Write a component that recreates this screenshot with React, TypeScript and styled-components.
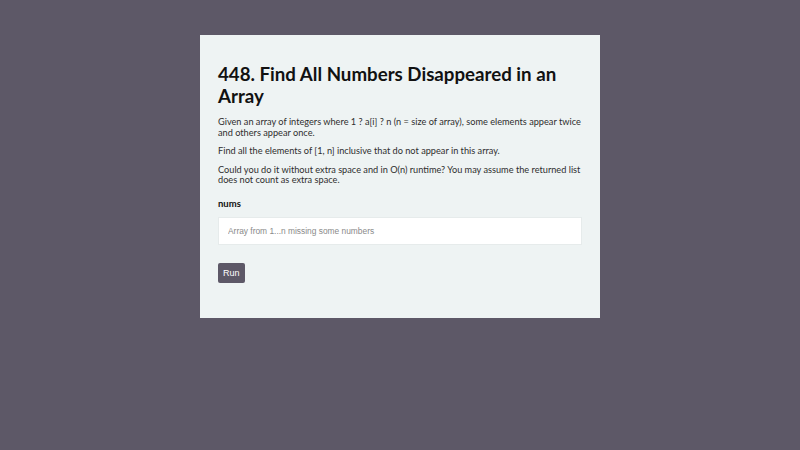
import styled, { createGlobalStyle } from "styled-components";

const GlobalStyle = createGlobalStyle`
  html, body {
    margin: 0;
    padding: 0;
    background: #5d5867;
  }
  body {
    font-family: Lato, "Open Sans", sans-serif;
  }
`;

const Page = styled.div`
  width: 800px;
  height: 450px;
  display: flex;
  justify-content: center;
  align-items: flex-start;
  padding-top: 35px;
  box-sizing: border-box;
`;

const Card = styled.div`
  width: 400px;
  box-sizing: border-box;
  padding: 28px 18px 35px;
  background: #eef3f3;
  color: #111;
`;

const Title = styled.h1`
  margin: 0 0 10px;
  font-size: 18.7px;
  line-height: 22px;
  font-weight: 700;
`;

const Text = styled.p`
  margin: 0 0 8px;
  font-size: 9.2px;
  line-height: 10.5px;
  color: #2e2e2e;
`;

const Label = styled.div`
  margin-top: 12px;
  font-size: 9.5px;
  font-weight: 700;
`;

const Input = styled.input`
  display: block;
  width: 100%;
  box-sizing: border-box;
  height: 28px;
  margin-top: 8px;
  padding: 0 9px;
  border: 1px solid #e6ebeb;
  background: #fff;
  font-family: "Liberation Sans", Arial, sans-serif;
  font-size: 8.4px;
  outline: none;

  &::placeholder {
    color: #8a8a8a;
  }
`;

const Button = styled.button`
  margin-top: 18px;
  height: 20px;
  padding: 0 5px;
  border: none;
  border-radius: 2px;
  background: #5d5867;
  color: #fff;
  font-family: "Liberation Sans", Arial, sans-serif;
  font-size: 9px;
`;

export default function App() {
  return (
    <>
      <GlobalStyle />
      <Page>
        <Card>
          <Title>448. Find All Numbers Disappeared in an Array</Title>
          <Text>
            Given an array of integers where 1 ? a[i] ? n (n = size of array),
            some elements appear twice and others appear once.
          </Text>
          <Text>Find all the elements of [1, n] inclusive that do not appear in this array.</Text>
          <Text>
            Could you do it without extra space and in O(n) runtime? You may
            assume the returned list does not count as extra space.
          </Text>
          <Label>nums</Label>
          <Input placeholder="Array from 1...n missing some numbers" />
          <Button>Run</Button>
        </Card>
      </Page>
    </>
  );
}
